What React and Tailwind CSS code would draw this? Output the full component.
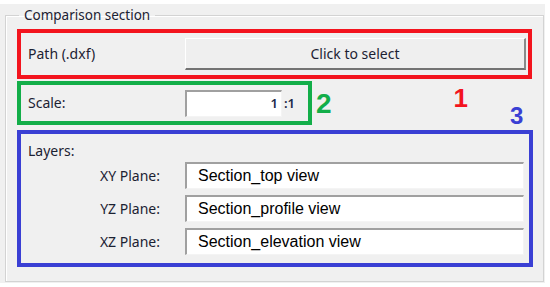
import React from "react";

const ui = { fontFamily: '"Noto Sans", "DejaVu Sans", sans-serif' };
const arial = { fontFamily: '"Liberation Sans", Arial, sans-serif' };

function Field({ text }) {
  return (
    <div
      className="h-[27px] w-[339px] bg-white border-t-2 border-l-2 border-[#a0a0a0] border-b border-r border-b-[#f4f4f4] border-r-[#f4f4f4] flex items-center pl-[11px] text-[16px] text-black leading-none"
      style={arial}
    >
      {text}
    </div>
  );
}

function PlaneRow({ label, value }) {
  return (
    <div className="flex items-center">
      <div className="w-[139px] text-right text-[14px] text-[#1c2233] leading-[16px]">{label}</div>
      <div className="ml-[25px]">
        <Field text={value} />
      </div>
    </div>
  );
}

export default function App() {
  return (
    <div className="w-[550px] h-[287px] bg-white pt-[4px]" style={ui}>
      <div className="w-[545px] h-[279px] bg-[#f0f0f0] pl-[5px] pt-[3px]">
        <fieldset className="w-[539px] h-[275px] border border-[#d3d3d3] shadow-[inset_1px_1px_0_#ffffff]">
          <legend className="ml-[13px] px-[5px] text-[13.5px] leading-[16px] text-[#1c2233]">
            Comparison section
          </legend>

          {/* 1: path */}
          <div className="mt-[6px] ml-[11px] w-[515px] h-[50px] border-4 border-[#f3141e] flex items-center pl-[7px] pr-[2px]">
            <div className="w-[157px] text-[14px] text-[#1c2233] leading-[16px]">Path (.dxf)</div>
            <div className="h-[32px] flex-1 bg-[#efefef] border-t border-l border-white border-b-2 border-r-2 border-b-[#737373] border-r-[#8a8a8a] flex items-center justify-center text-[14px] text-[#1c2233] leading-none">
              Click to select
            </div>
          </div>

          {/* 2: scale + numbers */}
          <div className="mt-[2px] ml-[11px] flex h-[46px]">
            <div className="w-[295px] h-[44px] border-4 border-[#13ae49] flex items-center pl-[7px]">
              <div className="w-[157px] text-[14px] text-[#1c2233] leading-[16px]">Scale:</div>
              <div className="w-[97px] h-[27px] bg-white border-t-2 border-l-2 border-[#a0a0a0] border-b border-r border-b-[#f4f4f4] border-r-[#f4f4f4] flex items-center justify-end pr-[3px] text-[13px] font-semibold text-[#1c2a4a] leading-none">
                1
              </div>
              <div className="ml-[2px] text-[13px] font-semibold text-[#1c2a4a] leading-none">:1</div>
            </div>
            <div className="ml-[4px] mt-[9px] self-start text-[28px] font-bold text-[#13ae49] leading-none" style={arial}>
              2
            </div>
            <div className="ml-[122px] mt-[4px] self-start text-[26px] font-bold text-[#f3141e] leading-none" style={arial}>
              1
            </div>
            <div className="ml-[42px] self-end mb-[-1px] text-[24px] font-bold text-[#3a3fd4] leading-none" style={arial}>
              3
            </div>
          </div>

          {/* 3: layers */}
          <div className="mt-[3px] ml-[11px] w-[516px] h-[137px] border-4 border-[#3a3fd4] pt-[9px] pl-[7px]">
            <div className="h-[18px] text-[14px] text-[#1c2233] leading-[16px]">Layers:</div>
            <div className="mt-[1px] -ml-[7px] flex flex-col gap-[6px]">
              <PlaneRow label="XY Plane:" value="Section_top view" />
              <PlaneRow label="YZ Plane:" value="Section_profile view" />
              <PlaneRow label="XZ Plane:" value="Section_elevation view" />
            </div>
          </div>
        </fieldset>
      </div>
    </div>
  );
}
